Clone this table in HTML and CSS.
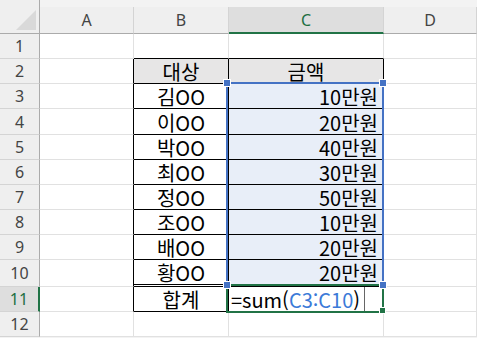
FILE: index.html
```html
<!DOCTYPE html>
<html lang="ko">
<head>
    <meta charset="UTF-8">
    <meta name="viewport" content="width=device-width, initial-scale=1.0">
    <title>합계 - Sheet1</title>
    <link rel="stylesheet" href="styles.css">
</head>
<body>
    <div class="sheet">
        <!-- column headers -->
        <div class="corner">
            <svg width="40" height="34" viewBox="0 0 40 34"><polygon points="36,10 36,30 16,30" fill="#d9d9d9"/></svg>
        </div>
        <div class="colhead">A</div>
        <div class="colhead">B</div>
        <div class="colhead active">C</div>
        <div class="colhead">D</div>

        <!-- row 1 -->
        <div class="rowhead">1</div>
        <div class="cell"></div>
        <div class="cell top"></div>
        <div class="cell top"></div>
        <div class="cell"></div>

        <!-- row 2 -->
        <div class="rowhead">2</div>
        <div class="cell edge"></div>
        <div class="cell box title">대상</div>
        <div class="cell box title">금액</div>
        <div class="cell"></div>

        <div class="rowhead">3</div>
        <div class="cell edge"></div>
        <div class="cell box">김OO</div>
        <div class="cell box money">10만원</div>
        <div class="cell"></div>

        <div class="rowhead">4</div>
        <div class="cell edge"></div>
        <div class="cell box">이OO</div>
        <div class="cell box money">20만원</div>
        <div class="cell"></div>

        <div class="rowhead">5</div>
        <div class="cell edge"></div>
        <div class="cell box">박OO</div>
        <div class="cell box money">40만원</div>
        <div class="cell"></div>

        <div class="rowhead">6</div>
        <div class="cell edge"></div>
        <div class="cell box">최OO</div>
        <div class="cell box money">30만원</div>
        <div class="cell"></div>

        <div class="rowhead">7</div>
        <div class="cell edge"></div>
        <div class="cell box">정OO</div>
        <div class="cell box money">50만원</div>
        <div class="cell"></div>

        <div class="rowhead">8</div>
        <div class="cell edge"></div>
        <div class="cell box">조OO</div>
        <div class="cell box money">10만원</div>
        <div class="cell"></div>

        <div class="rowhead">9</div>
        <div class="cell edge"></div>
        <div class="cell box">배OO</div>
        <div class="cell box money">20만원</div>
        <div class="cell"></div>

        <div class="rowhead">10</div>
        <div class="cell edge"></div>
        <div class="cell box double">황OO</div>
        <div class="cell box money double">20만원</div>
        <div class="cell"></div>

        <div class="rowhead active">11</div>
        <div class="cell edge"></div>
        <div class="cell box">합계</div>
        <div class="cell box formula">=sum(<span class="ref">C3:C10</span>)<span class="caret"></span></div>
        <div class="cell"></div>

        <div class="rowhead">12</div>
        <div class="cell"></div>
        <div class="cell"></div>
        <div class="cell"></div>
        <div class="cell"></div>

        <!-- selection overlays -->
        <div class="range"></div>
        <div class="editing"></div>
        <span class="handle h1"></span>
        <span class="handle h2"></span>
        <span class="handle h3"></span>
        <span class="handle h4"></span>
        <span class="handle fill"></span>
    </div>
</body>
</html>
```

FILE: styles.css
```css
body {
    margin: 0;
    background: #ffffff;
    font-family: "Noto Sans CJK KR", "Noto Sans", sans-serif;
}

.sheet {
    position: relative;
    display: grid;
    grid-template-columns: 40px 94px 95px 155px 93px;
    grid-template-rows: 34px 25px 25px 25px 26px 25px 25px 25px 25px 25px 27px 25px 25px;
    width: 477px;
    height: 338px;
    background: #f3f3f3;
    overflow: hidden;
}

.corner {
    background: #efefef;
    border-right: 1px solid #ababab;
    border-bottom: 1px solid #ababab;
    box-sizing: border-box;
}

.corner svg {
    display: block;
}

.colhead {
    margin-top: 7px;
    display: flex;
    align-items: center;
    justify-content: center;
    background: #efefef;
    border-right: 1px solid #d4d4d4;
    border-bottom: 1px solid #ababab;
    box-sizing: border-box;
    font-family: "Noto Sans", sans-serif;
    font-size: 16px;
    color: #444444;
}

.colhead.active {
    background: #dedede;
    border-bottom: 2px solid #217346;
    color: #1d6f42;
}

.rowhead {
    display: flex;
    align-items: center;
    justify-content: center;
    background: #efefef;
    border-right: 1px solid #ababab;
    border-bottom: 1px solid #d4d4d4;
    box-sizing: border-box;
    font-family: "Noto Sans", sans-serif;
    font-size: 16px;
    color: #444444;
}

.rowhead.active {
    background: #dedede;
    border-right: 2px solid #217346;
    color: #1d6f42;
}

.cell {
    display: flex;
    align-items: center;
    justify-content: center;
    background: #ffffff;
    border-right: 1px solid #e1e1e1;
    border-bottom: 1px solid #e1e1e1;
    box-sizing: border-box;
    font-size: 20px;
    line-height: 1;
    padding-top: 2px;
    color: #000000;
    white-space: nowrap;
}

.cell.top {
    border-bottom-color: #000000;
}

.cell.edge {
    border-right-color: #000000;
}

.cell.box {
    border-right-color: #000000;
    border-bottom-color: #000000;
}

.cell.title {
    background: #e7e6e6;
}

.cell.money {
    justify-content: flex-end;
    padding-right: 5px;
    background: #e8eef8;
}

.cell.double {
    border-bottom: 3px double #000000;
}

.cell.formula {
    justify-content: flex-start;
    padding-left: 2px;
}

.ref {
    color: #3b7ad8;
}

.caret {
    align-self: stretch;
    margin: -2px 0 0 4px;
    border-left: 1px solid #666666;
}

.range {
    position: absolute;
    left: 226px;
    top: 82px;
    width: 158px;
    height: 204px;
    border: 2px solid #4472c4;
    box-sizing: border-box;
}

.editing {
    position: absolute;
    left: 226px;
    top: 284px;
    width: 158px;
    height: 29px;
    border: 2px solid #217346;
    box-sizing: border-box;
}

.handle {
    position: absolute;
    width: 6px;
    height: 6px;
    background: #4472c4;
    outline: 1px solid #ffffff;
}

.h1 { left: 224px; top: 80px; }
.h2 { left: 380px; top: 80px; }
.h3 { left: 224px; top: 282px; }
.h4 { left: 380px; top: 282px; }

.handle.fill {
    left: 380px;
    top: 308px;
    width: 5px;
    height: 5px;
    background: #217346;
}
```
